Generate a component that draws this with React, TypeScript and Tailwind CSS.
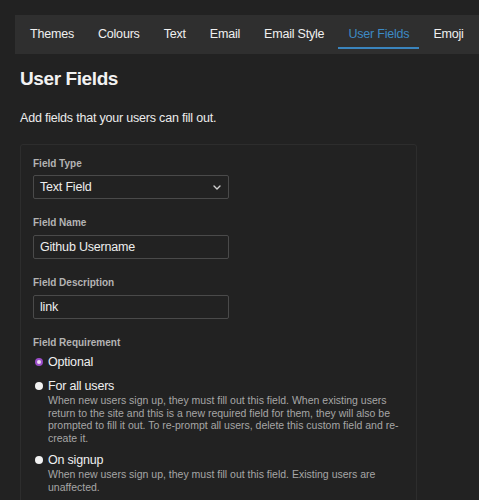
import { useState } from "react";

const tabs = ["Themes", "Colours", "Text", "Email", "Email Style", "User Fields", "Emoji"];

const requirements = [
  { id: "optional", label: "Optional", help: "" },
  {
    id: "all",
    label: "For all users",
    help: "When new users sign up, they must fill out this field. When existing users return to the site and this is a new required field for them, they will also be prompted to fill it out. To re-prompt all users, delete this custom field and re-create it.",
  },
  {
    id: "signup",
    label: "On signup",
    help: "When new users sign up, they must fill out this field. Existing users are unaffected.",
  },
];

function Chevron() {
  return (
    <svg width="8" height="5" viewBox="0 0 8 5" fill="none" className="mr-[7px]">
      <path d="M1 1l3 3 3-3" stroke="#d0d0d0" strokeWidth="1.4" strokeLinecap="round" strokeLinejoin="round" />
    </svg>
  );
}

function Label({ children }: { children: React.ReactNode }) {
  return <div className="text-[10px] leading-[14px] font-bold text-[#b4b4b4] mb-[4px]">{children}</div>;
}

const inputCls =
  "w-[196px] h-[24px] border border-[#4a4a4a] rounded-[2px] bg-transparent px-[6px] text-[12.5px] tracking-[-0.2px] text-[#eeeeee] outline-none";

export default function App() {
  const [active, setActive] = useState("User Fields");
  const [req, setReq] = useState("optional");

  return (
    <div
      className="w-[479px] min-h-[500px] overflow-hidden bg-[#222222] pt-[15px] text-[#efefef]"
      style={{ fontFamily: '"Liberation Sans", Arial, sans-serif' }}
    >
      <nav className="ml-[15px] h-[39px] bg-[#2f2f2f] flex items-start gap-[4px] pl-[5px] whitespace-nowrap">
        {tabs.map((t) => (
          <button
            key={t}
            onClick={() => setActive(t)}
            className={
              "h-[34px] px-[10px] pt-[7px] text-[12.5px] tracking-[-0.2px] leading-[25px] border-b-2 " +
              (t === active ? "text-[#3d8ac4] border-[#3a84bd]" : "text-[#f0f0f0] border-transparent")
            }
          >
            {t}
          </button>
        ))}
      </nav>

      <main className="px-[20px]">
        <h1 className="mt-[13px] text-[19px] tracking-[-0.4px] leading-[24px] font-bold text-[#f2f2f2]">User Fields</h1>
        <p className="mt-[19px] text-[12.5px] tracking-[-0.2px] leading-[16px] text-[#ececec]">
          Add fields that your users can fill out.
        </p>

        <section className="mt-[18px] w-[397px] border border-[#2d2d2d] rounded-[3px] px-[12px] pt-[12px] pb-[20px]">
          <div className="mb-[17px]">
            <Label>Field Type</Label>
            <div className="w-[196px] h-[24px] border border-[#4a4a4a] rounded-[2px] flex items-center justify-between pl-[6px] text-[12.5px] tracking-[-0.2px] text-[#eeeeee]">
              <span>Text Field</span>
              <Chevron />
            </div>
          </div>

          <div className="mb-[17px]">
            <Label>Field Name</Label>
            <input defaultValue="Github Username" className={inputCls} />
          </div>

          <div className="mb-[17px]">
            <Label>Field Description</Label>
            <input defaultValue="link" className={inputCls} />
          </div>

          <div>
            <div className="text-[10px] leading-[14px] font-bold text-[#b4b4b4]">Field Requirement</div>
            <div className="mt-[4px] flex flex-col gap-[8px]">
              {requirements.map((r) => (
                <label key={r.id} className="flex cursor-pointer" onClick={() => setReq(r.id)}>
                  <span className="w-[15px] pl-[2px] pt-[4px] shrink-0">
                    {req === r.id ? (
                      <span className="block w-[8px] h-[8px] rounded-full border-2 border-[#9b4dc9] bg-[#ecdcf2]" />
                    ) : (
                      <span className="block w-[8px] h-[8px] rounded-full bg-[#f2f2f2]" />
                    )}
                  </span>
                  <span className="flex flex-col">
                    <span className="text-[12.5px] tracking-[-0.2px] leading-[16px] text-[#f0f0f0]">{r.label}</span>
                    {r.help && <span className="text-[10.5px] leading-[12.5px] text-[#a6a6a6]">{r.help}</span>}
                  </span>
                </label>
              ))}
            </div>
          </div>
        </section>
      </main>
    </div>
  );
}
